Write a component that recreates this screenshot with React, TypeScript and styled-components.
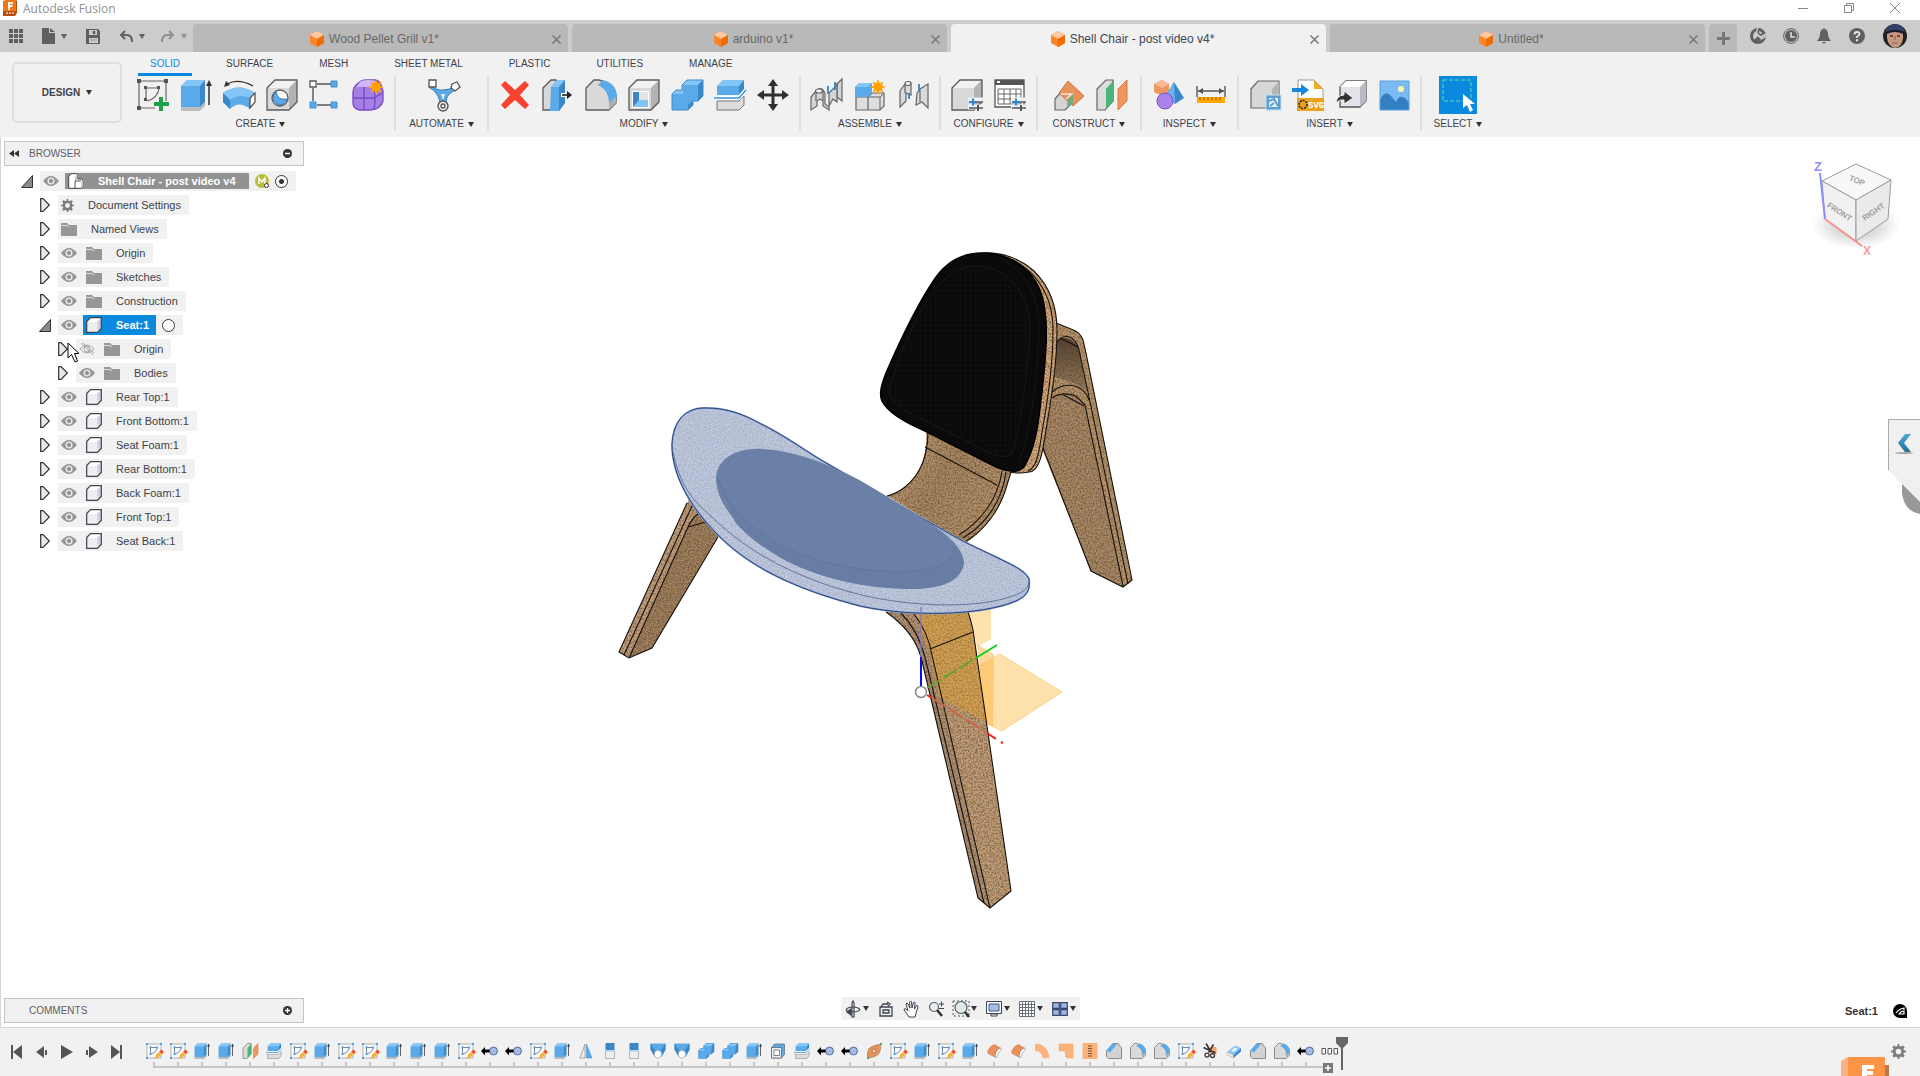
import React from "react";
import styled, { createGlobalStyle, css } from "styled-components";

const color = {
  bar: "#cccccc",
  tab: "#b9b9b9",
  panel: "#f1f1f1",
  line: "#c4c4c4",
  ink: "#3d424a",
  glyph: "#606060",
  accent: "#0a8ade",
};

const GlobalStyle = createGlobalStyle`
  * { box-sizing: border-box; }
  body {
    margin: 0;
    background: #ffffff;
    color: ${color.ink};
    font-family: "Liberation Sans", Arial, sans-serif;
    font-size: 11px;
    line-height: 14px;
  }
  button {
    margin: 0;
    padding: 0;
    border: 0;
    background: none;
    color: inherit;
    font: inherit;
  }
  svg { display: block; flex: none; overflow: visible; }
  ul, ol { margin: 0; padding: 0; list-style: none; }
  h1, h2 { margin: 0; font: inherit; }
`;

/* ------------------------------------------------------------------ */
/* Feature icons, all drawn in a 32 x 32 box                           */
/* ------------------------------------------------------------------ */

const SKY = "#5aa9e8";
const SKY_L = "#84c5f7";
const SKY_D = "#3b87c8";
const EDGE = "#5b5b5b";

const GreyBox = () => (
  <>
    <path d="M1 9 9 1H31V23L23 31H1Z" fill="#d9d9d9" />
    <path d="M1 9 9 1H31L23 9Z" fill="#f2f2f2" />
    <path d="M23 9 31 1V23L23 31Z" fill="#b3b3b3" />
    <path d="M1 9 9 1H31V23L23 31H1Z" fill="none" stroke={EDGE} strokeWidth="1.3" />
  </>
);

const Star = ({ x, y }: { x: number; y: number }) => (
  <path
    transform={`translate(${x} ${y})`}
    d="M0-8 1.6-3.8 5.6-5.6 3.8-1.6 8 0 3.8 1.6 5.6 5.6 1.6 3.8 0 8-1.6 3.8-5.6 5.6-3.8 1.6-8 0-3.8-1.6-5.6-5.6-1.6-3.8Z"
    fill="#ffa200"
  />
);

const Sliders = () => (
  <g>
    <path d="M17 21h15M17 28h15" stroke="#f1f1f1" strokeWidth="5" />
    <path d="M18 23h14M18 29h14" stroke="#555" strokeWidth="1.6" />
    <path d="M22 19.500v7M18.500 23h7" stroke="#2a86d6" strokeWidth="2" />
    <path d="M27 26v6" stroke="#555" strokeWidth="2" />
  </g>
);

const shapes: Record<string, React.ReactNode> = {
  sketch: (
    <>
      <path d="M3 2H29V22M2 3V29H18" fill="none" stroke="#666" strokeWidth="1.2" />
      <path d="M9 9H20M9 9V21M22 9Q21 19 10 22" fill="none" stroke="#666" strokeWidth="1.2" />
      <path d="M0 0h4v4H0zM27 0h4v4h-4zM0 27h4v4H0zM7 7h3v3H7zM20 7h3v3h-3zM7 19h3v3H7z" fill="#555" />
      <path d="M22 18h4v5h6v4h-6v5h-4v-5h-5v-4h5z" fill="#21a04c" />
    </>
  ),
  sketchMini: (
    <>
      <path d="M2 2H30V30H2Z" fill="#f7f9fb" stroke="#a2a2a2" strokeWidth="1.600" />
      <path d="M9 9H22M9 9V23M22 9Q21 19 10 22" fill="none" stroke="#6b7b90" strokeWidth="1.800" />
      <path d="M0 0h4v4H0zM28 0h4v4h-4zM0 28h4v4H0zM7 7h4v4H7zM20 7h4v4h-4zM7 20h4v4H7z" fill="#5b9ee0" />
      <path d="M17 32 20 24 29 15 34 20 25 29Z" fill="#f4b13d" />
      <path d="M27 17 31 13 36 18 32 22Z" fill="#e2523c" />
    </>
  ),
  extrude: (
    <>
      <path d="M1 28H20L25 23V27L20 32H1Z" fill="#bdbdbd" />
      <path d="M1 7 7 1H25L20 7V28H1Z" fill={SKY} />
      <path d="M1 7 7 1H25L20 7Z" fill={SKY_L} />
      <path d="M20 7 25 1V23L20 28Z" fill={SKY_D} />
      <path d="M29 26V5" stroke="#333" strokeWidth="1.500" />
      <path d="M26 7 29 1 32 7Z" fill="#333" />
    </>
  ),
  revolve: (
    <>
      <path d="M0 14Q16 3 32 14L27 19V30Q16 21 7 30L0 23Z" fill={SKY} />
      <path d="M0 14Q16 3 32 14L27 19Q16 14 7 21Z" fill={SKY_L} />
      <path d="M7 21V30L0 23V14Z" fill={SKY_D} />
      <path d="M27 19 32 14V23L27 29Z" fill="#fff" stroke="#555" strokeWidth="1.300" />
      <path d="M4 5Q15-1 30 7" fill="none" stroke="#333" strokeWidth="1.300" />
      <path d="M1 8 3 2 7 6Z" fill="#333" />
    </>
  ),
  hole: (
    <>
      <GreyBox />
      <circle cx="14" cy="19" r="8" fill="#fff" stroke={EDGE} strokeWidth="1.300" />
      <path d="M10 13A7 7 0 1 0 21 20Q12 22 10 13Z" fill={SKY} stroke="#2f74b3" />
    </>
  ),
  pattern: (
    <>
      <path d="M8 5H22M4 9V22M8 26H22" stroke="#555" strokeWidth="1.400" />
      <path d="M1 2h6v6H1z" fill="#fff" stroke="#555" strokeWidth="1.300" />
      <path d="M22 2h6v6h-6zM1 23h6v6H1zM22 23h6v6h-6z" fill={SKY} stroke="#3f8fd4" />
    </>
  ),
  form: (
    <>
      <path d="M1 13Q1 9 4 6L9 2Q11 1 16 1H23Q28 2 29 6L31 12V22Q30 26 26 29Q23 31 18 31H8Q2 30 1 25Z" fill="#a67fe6" stroke="#7747c4" strokeWidth="1.300" />
      <path d="M4 8 9 2Q16 0 24 2L22 9Q13 7 4 8Z" fill="#d0b5fa" />
      <path d="M12 8V30M1 19H22L30 14M22 9Q24 20 22 30" fill="none" stroke="#7747c4" strokeWidth="1.300" />
      <Star x={24} y={8} />
    </>
  ),
  automate: (
    <>
      <path d="M4 6Q11 12 17 11Q23 11 27 8L29 11Q22 15 21 18Q20 22 20 27H14Q14 21 12 17Q9 11 4 9Z" fill={SKY} stroke="#387fb8" />
      <path d="M15 15 19 15 17 21Z" fill="#f1f1f1" />
      <path d="M3 1h7v7H3zM26 5 31 3 34 8 29 12 25 9Z" fill="#fff" stroke="#555" strokeWidth="1.300" />
      <circle cx="17" cy="27" r="5" fill="#eee" stroke="#555" strokeWidth="1.400" />
      <circle cx="17" cy="27" r="2" fill="none" stroke="#555" strokeWidth="1.300" />
    </>
  ),
  remove: <path d="M2 6 6 2 16 11 26 2 30 6 21 16 30 26 26 30 16 21 6 30 2 26 11 16Z" fill="#f8432f" />,
  pressPull: (
    <>
      <path d="M1 9 9 1H14V31H1Z" fill="#d8d8d8" stroke={EDGE} strokeWidth="1.300" />
      <path d="M9 8 15 1H23V24L17 32H8Z" fill={SKY} />
      <path d="M9 8 15 1H23L17 8Z" fill={SKY_L} />
      <path d="M17 8 23 1V24L17 32Z" fill={SKY_D} />
      <path d="M19 16H27" stroke="#fff" strokeWidth="4" />
      <path d="M20 16H27" stroke="#222" strokeWidth="1.600" />
      <path d="M25 12 30 16 25 20Z" fill="#222" />
    </>
  ),
  fillet: (
    <>
      <path d="M1 9 9 1H14Q29 5 31 17V24L24 31H1Z" fill="#dadada" stroke={EDGE} strokeWidth="1.300" />
      <path d="M24 24 31 18V24L24 31Z" fill="#b0b0b0" />
      <path d="M13 6 18 1Q31 4 32 17L24 24Q24 11 13 6Z" fill={SKY} />
    </>
  ),
  chamfer: (
    <>
      <path d="M1 16 14 1H24L31 10V31H5L1 27Z" fill="#d2d2d2" stroke={EDGE} strokeWidth="1.300" />
      <path d="M1 15 13 1 21 3 8 19Z" fill={SKY} />
    </>
  ),
  shell: (
    <>
      <GreyBox />
      <path d="M4 12H21V29H4Z" fill="#fff" />
      <path d="M5 13 11 19H20V28H5Z" fill={SKY_L} />
      <path d="M5 13H11V21L5 28Z" fill={SKY_D} />
      <path d="M11 13H20V21H11Z" fill="#e4e4e4" />
    </>
  ),
  combine: (
    <>
      <path d="M1 15 5 11H11V6L16 1H32V17L27 22H22V26L17 31H1Z" fill={SKY} />
      <path d="M1 15 5 11H11V6L16 1H32L27 6H12V15Z" fill={SKY_L} />
      <path d="M27 6 32 1V17L27 22ZM17 26 22 22V26L17 31Z" fill={SKY_D} />
      <path d="M1 15 5 11H11V6L16 1H32V17L27 22H22V26L17 31H1Z" fill="none" stroke="#3b8bd0" />
    </>
  ),
  split: (
    <>
      <path d="M3 22H25L30 17V26L25 31H3Z" fill="#dcdcdc" stroke="#777" />
      <path d="M3 7 9 1H30L25 7V16H3Z" fill={SKY} />
      <path d="M3 7 9 1H30L25 7Z" fill={SKY_L} />
      <path d="M25 7 30 1V10L25 16Z" fill={SKY_D} />
      <path d="M0 19H25L32 11" fill="none" stroke="#fff" strokeWidth="4" />
      <path d="M0 19H25L32 11" fill="none" stroke="#3794dc" strokeWidth="1.500" />
    </>
  ),
  move: (
    <path d="M16 0 21 7H17.500V14.500H25V11L32 16 25 21V17.500H17.500V25H21L16 32 11 25H14.500V17.500H7V21L0 16 7 11V14.500H14.500V7H11Z" fill="#303030" />
  ),
  joint: (
    <g fill="#d5d5d5" stroke="#666" strokeWidth="1.200">
      <path d="M26 5 31 0V22L26 18Z" />
      <path d="M18 14 24 8 26 5V23L22 20 18 27Z" />
      <path d="M0 31V18L5 12Q9 8 12 11L14 14V25L18 28V31L12 27V22L9 20 6 22V27Z" />
      <path d="M5 13V22M12 12V22" fill="none" />
      <ellipse cx="8" cy="12" rx="3.500" ry="2" fill="#f4f4f4" />
      <path d="M17 7V15M24 3V11" stroke="#2b86d1" strokeWidth="1.800" />
    </g>
  ),
  newComponent: (
    <>
      <path d="M2 18H14V31H2ZM14 18 18 14H30V27L26 31H14Z" fill="#dedede" stroke="#666" strokeWidth="1.200" />
      <path d="M14 18H26L30 14M26 18V31" fill="none" stroke="#666" />
      <path d="M1 8 5 4H18V14L14 18H1Z" fill={SKY} />
      <path d="M1 8 5 4H18L14 8Z" fill={SKY_L} />
      <Star x={24} y={8} />
    </>
  ),
  asBuilt: (
    <g fill="#dadada" stroke="#666" strokeWidth="1.200">
      <path d="M3 28V12L8 5Q11 1 14 4V16L9 14V22Z" />
      <path d="M20 14 23 10 31 5V29L25 23 19 26Z" />
      <path d="M8 6V14M23 11V23" fill="none" />
      <ellipse cx="11" cy="4.500" rx="3" ry="2" fill="#f4f4f4" />
      <path d="M12 14V20M22 5V13" stroke="#2b86d1" strokeWidth="1.800" />
    </g>
  ),
  configure: (
    <>
      <GreyBox />
      <Sliders />
    </>
  ),
  configTable: (
    <>
      <path d="M1 1H30V28H1Z" fill="#fff" stroke="#555" strokeWidth="1.300" />
      <path d="M1 1H30V6H1Z" fill="#555" />
      <path d="M3 2h3v2H3z" fill="#fff" />
      <path d="M4 10H27V25H4ZM4 15H27M4 20H27M10 10V25M16 10V25M22 10V25" fill="none" stroke="#666" />
      <Sliders />
    </>
  ),
  construct: (
    <>
      <path d="M3 20 9 13H18V26L13 31H3Z" fill="#d5d5d5" stroke="#666" strokeWidth="1.200" />
      <path d="M16 2 32 17 21 27 7 14Z" fill="#e9935c" stroke="#cf7138" />
      <path d="M9 15H20L14 20" fill="none" stroke="#f7e6d8" strokeWidth="1.500" />
      <path d="M15 21 21 15V24L15 30Z" fill="#56b37c" opacity=".75" />
    </>
  ),
  planes: (
    <>
      <path d="M2 10 11 1H18V22L10 31H2Z" fill="#dcdcdc" stroke="#666" strokeWidth="1.200" />
      <path d="M11 10 19 1V22L11 30Z" fill="#4bb47a" />
      <path d="M23 10 32 1V22L23 31Z" fill="#ee965b" stroke="#d97b3f" />
    </>
  ),
  solids: (
    <>
      <path d="M2 5 10 1 17 5V13L10 17 2 13Z" fill="#ee9660" />
      <path d="M2 5 10 1 17 5 10 9Z" fill="#f8b994" />
      <path d="M22 3 32 19 23 25 13 18Z" fill="#3a86cc" />
      <path d="M22 3 23 25 13 18Z" fill="#69b2ee" />
      <circle cx="13" cy="22" r="8" fill="#a982ea" stroke="#7b52c7" />
    </>
  ),
  measure: (
    <>
      <path d="M2 7V18M30 7V18M3 12H29" stroke="#555" strokeWidth="1.400" />
      <path d="M3 12 8 9V15ZM29 12 24 9V15Z" fill="#555" />
      <path d="M2 18H30V24H2Z" fill="#ffa500" />
      <path d="M5 18v3M9 18v3M13 18v3M17 18v3M21 18v3M25 18v3" stroke="#8c5a00" />
    </>
  ),
  derive: (
    <>
      <path d="M2 10 9 2H30V21L23 29H2Z" fill="#d8d8d8" stroke="#666" strokeWidth="1.200" />
      <path d="M23 10 30 2V21L23 29Z" fill="#b6b6b6" />
      <path d="M17 16H32V31H17Z" fill="#5e9fce" stroke="#c6e0f2" />
      <path d="M20 19H29V28H20Z" fill="#e4f1fa" />
      <path d="M20 22 25 20 29 27M21 27 25 24" fill="none" stroke="#5e9fce" strokeWidth="2" />
    </>
  ),
  insertSvg: (
    <>
      <path d="M6 1H22L31 10V31H6Z" fill="#fff" stroke="#999" />
      <path d="M22 1V10H31Z" fill="#f4ac24" />
      <path d="M5 19H32V32H5Z" fill="#eba31c" />
      <circle cx="11" cy="25.500" r="4" fill="none" stroke="#222" strokeWidth="1.500" strokeDasharray="2 1" />
      <text x="16" y="29" fontFamily="Liberation Mono, monospace" fontWeight="700" fontSize="9" fill="#fff">SVG</text>
      <path d="M0 9H9V5L17 11 9 17V13H0Z" fill="#1787e0" />
    </>
  ),
  insertMesh: (
    <>
      <path d="M5 8 11 2H31V22L25 28H5Z" fill="#e2e3ea" stroke="#555" strokeWidth="1.300" />
      <path d="M5 8 11 2H31L25 8Z" fill="#fff" />
      <path d="M25 8 31 2V22L25 28Z" fill="#b8bac6" />
      <path d="M1 24Q2 16 9 16V12L18 19 9 25V21Q5 20 1 24Z" fill="#333" stroke="#f1f1f1" />
    </>
  ),
  canvas: (
    <>
      <path d="M2 2H31V31H2Z" fill="#7bbaf2" />
      <circle cx="23" cy="10" r="3" fill="#fff3b6" />
      <path d="M2 21Q7 10 13 17L18 23Q23 12 31 24V31H2Z" fill="#327fc3" />
      <path d="M2 2H31V31H2Z" fill="none" stroke="#5b9fd9" />
    </>
  ),
  select: (
    <>
      <path d="M1 1H29V22H1Z" fill="none" stroke="#63dcb4" strokeDasharray="4 2" />
      <path d="M21 15V29L25 26 28 33 31 31 28 25 33 25Z" fill="#fff" />
    </>
  ),
  jointMini: (
    <>
      <circle cx="23" cy="16" r="8" fill="#a3bce4" stroke="#3d5684" strokeWidth="1.600" />
      <path d="M-2 16 6 8V13H15V19H6V25Z" fill="#000" />
    </>
  ),
  mirror: (
    <>
      <path d="M14 2V30H4Z" fill="#eee" stroke="#888" strokeWidth="1.400" />
      <path d="M17 2V30H28Z" fill={SKY} stroke={SKY_D} />
    </>
  ),
  halfBox: (
    <>
      <path d="M7 16H25V31H7Z" fill="#eee" stroke="#999" strokeWidth="1.400" />
      <path d="M7 0H25V14H7Z" fill={SKY_D} />
      <path d="M7 14H25V17H7Z" fill="#b8dbf6" />
    </>
  ),
  loft: (
    <>
      <path d="M1 1H31V13L24 27H9L1 13Z" fill={SKY} />
      <path d="M1 1 11 16 7 24 1 13ZM31 1 21 16 26 22 31 13Z" fill={SKY_D} />
      <path d="M16 14 23 18V26L16 31 9 26V18Z" fill="#fff" stroke="#999" strokeWidth="1.400" />
    </>
  ),
  shellMini: (
    <>
      <path d="M3 9 9 2H29V23L23 30H3Z" fill={SKY} stroke="#6a7887" strokeWidth="1.600" />
      <path d="M3 9H23V30H3Z" fill="#eee" stroke="#667" strokeWidth="1.600" />
      <path d="M8 14H19V25H8Z" fill="#fff" stroke="#667" strokeWidth="1.600" />
    </>
  ),
  patch: (
    <>
      <path d="M3 30Q1 17 7 10Q12 5 29 2Q31 16 24 23Q18 29 3 30Z" fill="#e99058" stroke="#8f6f52" />
      <circle cx="16" cy="16" r="3" fill="#fff" stroke="#555" />
      <path d="M2 28h4v4H2zM28 0h4v4h-4z" fill="#3fae66" />
    </>
  ),
  thicken: (
    <>
      <path d="M3 17Q8 5 17 3L29 10Q19 14 18 28L4 21Z" fill="#e99058" stroke="#c97740" />
      <path d="M18 28Q19 14 29 10L31 14Q24 17 22 29Z" fill="#fff" stroke="#777" />
    </>
  ),
  arcBand: <path d="M3 2Q26 2 30 29L18 30Q15 15 3 15Z" fill="#fdb27b" stroke="#f39a58" />,
  corner: <path d="M2 2H30V30H18L15 27V16H2Z" fill="#fdb27b" stroke="#f39a58" />,
  stitch: (
    <>
      <path d="M1 0H31V32H1Z" fill="#fdb27b" />
      <path d="M12 6h8M12 11h8M12 16h8M12 21h8M12 26h8" stroke="#7c5331" strokeWidth="2" />
    </>
  ),
  trim: (
    <>
      <path d="M17 8H29V23H17Z" fill="#f0a26c" />
      <path d="M8 1 18 18M23 3 13 19M3 9 27 20" stroke="#333" strokeWidth="3" />
      <circle cx="10" cy="24" r="4" fill="none" stroke="#333" strokeWidth="2.500" />
      <circle cx="21" cy="25" r="4" fill="none" stroke="#333" strokeWidth="2.500" />
    </>
  ),
  erase: (
    <>
      <path d="M2 18 18 5 30 10 15 24Z" fill={SKY_L} />
      <path d="M2 18 15 24V30L2 23Z" fill="#f2f2f2" stroke="#999" />
      <path d="M15 24 30 10V17L15 30Z" fill={SKY_D} />
      <path d="M10 16 18 9 23 12 15 18Z" fill="#eef6fd" />
    </>
  ),
  group: <path d="M0 11h7v11H0zM12 11h7v11h-7zM24 11h7v11h-7z" fill="#fff" stroke="#555" strokeWidth="2" />,
};

const Feature = ({ name, size = 32 }: { name: string; size?: number }) => (
  <svg width={size} height={size} viewBox="0 0 32 32" aria-hidden="true">
    {shapes[name]}
  </svg>
);

const Caret = ({ fill = "#333" }: { fill?: string }) => (
  <svg width="6" height="5" viewBox="0 0 6 5" aria-hidden="true">
    <path d="M0 0H6L3 5Z" fill={fill} />
  </svg>
);

const GEAR =
  "M7 0h2v2l2 .8L12.500 1.300 14.700 3.500 13.200 5 14 7h2v2h-2l-.8 2 1.500 1.500-2.200 2.200L11 13.200 9 14v2H7v-2l-2-.8-1.500 1.500-2.200-2.200L2.800 11 2 9H0V7h2l.8-2L1.300 3.500 3.500 1.300 5 2.800 7 2ZM8 5a3 3 0 1 0 0 6 3 3 0 0 0 0-6Z";

const Gear = ({ size }: { size: number }) => (
  <svg width={size} height={size} viewBox="0 0 16 16" aria-hidden="true">
    <path d={GEAR} fill="#7d7d7d" fillRule="evenodd" />
  </svg>
);

/* ------------------------------------------------------------------ */
/* Title bar                                                           */
/* ------------------------------------------------------------------ */

const Shell = styled.div`
  position: relative;
  display: flex;
  flex-direction: column;
  min-height: 100vh;
  overflow: hidden;
`;

const TitleBar = styled.header`
  display: flex;
  align-items: flex-start;
  gap: 6px;
  height: 20px;
  padding-left: 3px;
  color: #909090;
  h1 {
    flex: 1;
    font-family: "Open Sans", "Noto Sans", sans-serif;
    font-size: 12px;
    line-height: 17px;
  }
`;

const WindowButton = styled.button`
  display: grid;
  place-items: center;
  width: 46px;
  height: 15px;
`;

const WindowButtons = styled.div`
  display: flex;
  padding-right: 2px;
`;

const Title = () => (
  <TitleBar>
    <svg width="14" height="16" viewBox="0 0 14 16" aria-hidden="true">
      <path d="M0 2 3 0H13L14 1V13L12 16H0Z" fill="#b3500f" />
      <path d="M0 1 3 0H13V11H0Z" fill="#f37515" />
      <path d="M5 2H10V4H7V5H9.500V7H7V10H5Z" fill="#fff" />
      <path d="M3 13h8" stroke="#f7c7a0" strokeWidth="1.500" strokeDasharray="2 1" />
    </svg>
    <h1>Autodesk Fusion</h1>
    <WindowButtons>
      <WindowButton aria-label="Minimize">
        <svg width="10" height="10"><path d="M0 5.500H10" stroke="#888" /></svg>
      </WindowButton>
      <WindowButton aria-label="Restore">
        <svg width="10" height="10"><path d="M.5 2.500H7.500V9.500H.5ZM2.500 2.500V.5H9.500V7.500H7.500" fill="none" stroke="#888" /></svg>
      </WindowButton>
      <WindowButton aria-label="Close">
        <svg width="10" height="10"><path d="M0 0 10 10M10 0 0 10" stroke="#888" /></svg>
      </WindowButton>
    </WindowButtons>
  </TitleBar>
);

/* ------------------------------------------------------------------ */
/* Document tabs                                                       */
/* ------------------------------------------------------------------ */

const TabBar = styled.div`
  display: flex;
  align-items: flex-end;
  gap: 4px;
  height: 32px;
  background: ${color.bar};
`;

const QuickAccess = styled.div`
  display: flex;
  align-items: center;
  align-self: stretch;
  gap: 18px;
  width: 189px;
  padding-left: 9px;
`;

const QuickButton = styled.button<{ $faded?: boolean }>`
  display: flex;
  align-items: center;
  gap: 6px;
  opacity: ${(p) => (p.$faded ? 0.55 : 1)};
`;

const DocTab = styled.div<{ $active?: boolean }>`
  display: flex;
  align-items: center;
  flex: 1;
  height: 28px;
  padding: 2px 7px 0 4px;
  border-radius: 4px 4px 0 0;
  background: ${(p) => (p.$active ? color.panel : color.tab)};
  color: ${(p) => (p.$active ? "#404652" : "#686868")};
`;

const DocName = styled.button`
  display: flex;
  flex: 1;
  align-items: center;
  justify-content: center;
  gap: 5px;
  font-size: 12px;
`;

const AddTab = styled.button`
  display: grid;
  place-items: center;
  width: 28px;
  height: 28px;
  border-radius: 4px 4px 0 0;
  background: ${color.tab};
`;

const Account = styled.div`
  display: flex;
  align-items: center;
  align-self: stretch;
  padding-right: 3px;
`;

const AccountButton = styled.button`
  display: grid;
  place-items: center;
  width: 33px;
  height: 32px;
`;

const Avatar = styled(AccountButton)`
  width: 44px;
`;

const OrangeCube = () => (
  <svg width="14" height="16" viewBox="0 0 14 16" aria-hidden="true">
    <path d="M0 4 7 0 14 4V12L7 16 0 12Z" fill="#ff8426" />
    <path d="M0 4 7 0 14 4 7 8Z" fill="#ffc9a1" />
    <path d="M7 8 14 4V12L7 16Z" fill="#ee6c05" />
  </svg>
);

const Cross = () => (
  <svg width="9" height="9" viewBox="0 0 9 9" aria-hidden="true">
    <path d="M.5.5 8.500 8.500M8.500.5.5 8.500" stroke="#777" strokeWidth="1.500" />
  </svg>
);

const documents = [
  { name: "Wood Pellet Grill v1*" },
  { name: "arduino v1*" },
  { name: "Shell Chair - post video v4*", active: true },
  { name: "Untitled*" },
];

const Tabs = () => (
  <TabBar>
    <QuickAccess>
      <QuickButton aria-label="Data panel">
        <svg width="14" height="14" viewBox="0 0 14 14">
          <path d="M0 0h4v4H0zM5 0h4v4H5zM10 0h4v4h-4zM0 5h4v4H0zM5 5h4v4H5zM10 5h4v4h-4zM0 10h4v4H0zM5 10h4v4H5zM10 10h4v4h-4z" fill={color.glyph} />
        </svg>
      </QuickButton>
      <QuickButton aria-label="File">
        <svg width="14" height="16" viewBox="0 0 14 16">
          <path d="M1 0H8V5H14V16H1ZM9 0 14 4H9Z" fill={color.glyph} />
        </svg>
        <Caret fill={color.glyph} />
      </QuickButton>
      <QuickButton aria-label="Save">
        <svg width="16" height="15" viewBox="0 0 16 15">
          <path d="M1 0H13L15 2V15H1ZM4 1V6H12V1ZM4 9V14H13V9Z" fill={color.glyph} fillRule="evenodd" />
          <path d="M8 2H10V5H8ZM5 11H12" fill={color.glyph} stroke={color.glyph} strokeWidth=".5" />
        </svg>
      </QuickButton>
      <QuickButton aria-label="Undo">
        <svg width="14" height="13" viewBox="0 0 14 13">
          <path d="M6 1 2 5 6 9M2 5H8Q13 5 13 12" fill="none" stroke={color.glyph} strokeWidth="2" />
        </svg>
        <Caret fill={color.glyph} />
      </QuickButton>
      <QuickButton aria-label="Redo" $faded>
        <svg width="12" height="13" viewBox="0 0 12 13">
          <path d="M6 1 10 5 6 9M10 5H4Q-1 5-1 12" fill="none" stroke={color.glyph} strokeWidth="2" />
        </svg>
        <Caret fill={color.glyph} />
      </QuickButton>
    </QuickAccess>
    {documents.map((d) => (
      <DocTab key={d.name} $active={d.active}>
        <DocName>
          <OrangeCube />
          {d.name}
        </DocName>
        <button aria-label={`Close ${d.name}`}>
          <Cross />
        </button>
      </DocTab>
    ))}
    <AddTab aria-label="New design">
      <svg width="13" height="13"><path d="M6.500 0V13M0 6.500H13" stroke="#777" strokeWidth="3" /></svg>
    </AddTab>
    <Account>
      <AccountButton aria-label="Extensions">
        <svg width="16" height="16" viewBox="0 0 16 16">
          <circle cx="8" cy="8" r="6.500" fill="none" stroke={color.glyph} strokeWidth="3" />
          <path d="M3 13 8 8 11 11 8 15Z" fill={color.glyph} />
          <path d="M8 0 6 6 10 9 16 6M11 11 16 8" fill="none" stroke={color.bar} strokeWidth="1.500" />
          <path d="M10 0 8 4 9 6 11 7 14 5" fill="none" stroke={color.glyph} strokeWidth="1.600" />
        </svg>
      </AccountButton>
      <AccountButton aria-label="Job status">
        <svg width="16" height="16" viewBox="0 0 16 16">
          <circle cx="8" cy="8" r="7.400" fill="none" stroke={color.glyph} />
          <circle cx="8" cy="8" r="6" fill={color.glyph} />
          <path d="M8 4V9H12" fill="none" stroke="#ddd" strokeWidth="1.600" />
        </svg>
      </AccountButton>
      <AccountButton aria-label="Notifications">
        <svg width="14" height="16" viewBox="0 0 14 16">
          <path d="M6 1Q7-1 8 1Q11 2 11 6Q11 10 14 13H0Q3 10 3 6Q3 2 6 1ZM5 14H9Q7 17 5 14Z" fill={color.glyph} />
        </svg>
      </AccountButton>
      <AccountButton aria-label="Help">
        <svg width="16" height="16" viewBox="0 0 16 16">
          <circle cx="8" cy="8" r="8" fill={color.glyph} />
          <path d="M5.500 6.500Q5.500 4 8 4T10.500 6.300Q10.500 7.500 8 8.500V10" fill="none" stroke="#e4e4e4" strokeWidth="1.800" />
          <path d="M7 11.300h2v2H7z" fill="#e4e4e4" />
        </svg>
      </AccountButton>
      <Avatar aria-label="Account">
        <svg width="24" height="24" viewBox="0 0 24 24">
          <defs>
            <clipPath id="avatar"><circle cx="12" cy="12" r="12" /></clipPath>
          </defs>
          <g clipPath="url(#avatar)">
            <path d="M0 0H24V24H0Z" fill="#20251c" />
            <path d="M4 8H20V14Q19 23 12 24Q5 22 4 14Z" fill="#c79880" />
            <path d="M2 8Q4 0 12 0T22 8Q12 4 2 8Z" fill="#33416b" />
            <path d="M3 8Q12 4 21 8L20 10Q12 6 4 10Z" fill="#171d33" />
            <path d="M7 12h3M14 12h3" stroke="#4b2f28" strokeWidth="1.500" />
            <path d="M12 12v4M9 19h6" stroke="#8d5c49" />
          </g>
        </svg>
      </Avatar>
    </Account>
  </TabBar>
);

/* ------------------------------------------------------------------ */
/* Ribbon                                                              */
/* ------------------------------------------------------------------ */

const Ribbon = styled.div`
  display: flex;
  height: 85px;
  background: ${color.panel};
`;

const Workspace = styled.button`
  display: flex;
  align-items: center;
  justify-content: center;
  gap: 6px;
  width: 110px;
  height: 61px;
  margin: 10px 5px 0 12px;
  border: 2px solid #dfdfdf;
  border-radius: 5px;
  font-size: 10px;
  font-weight: 700;
`;

const RibbonTabs = styled.nav`
  display: flex;
  gap: 22px;
  padding-left: 11px;
`;

const RibbonTab = styled.button<{ $active?: boolean }>`
  height: 24px;
  padding: 2px 12px 0;
  border-bottom: 3px solid transparent;
  font-size: 10px;
  ${(p) =>
    p.$active &&
    css`
      border-color: ${color.accent};
      color: ${color.accent};
    `}
`;

const Groups = styled.div`
  display: flex;
`;

const Group = styled.section<{ $min?: number }>`
  display: flex;
  flex-direction: column;
  align-items: center;
  min-width: ${(p) => p.$min ?? 0}px;
  padding: 0 5px;
  border-right: 2px solid #dedede;
  height: 54px;
  &:last-child {
    border-right-color: transparent;
  }
`;

const Tools = styled.div`
  display: flex;
  gap: 5px;
  padding: 0 2px;
`;

const Tool = styled.button<{ $on?: boolean }>`
  display: grid;
  place-items: center;
  width: 38px;
  height: 38px;
  flex: none;
  background: ${(p) => (p.$on ? color.accent : "none")};
`;

const GroupLabel = styled.button`
  display: flex;
  align-items: center;
  gap: 4px;
  margin-top: 3px;
  font-size: 10px;
`;

const ribbonTabs = ["SOLID", "SURFACE", "MESH", "SHEET METAL", "PLASTIC", "UTILITIES", "MANAGE"];

const groups: { label: string; tools: string[]; min?: number; on?: boolean }[] = [
  { label: "CREATE", tools: ["sketch", "extrude", "revolve", "hole", "pattern", "form"] },
  { label: "AUTOMATE", tools: ["automate"], min: 93 },
  { label: "MODIFY", tools: ["remove", "pressPull", "fillet", "shell", "combine", "split", "move"] },
  { label: "ASSEMBLE", tools: ["joint", "newComponent", "asBuilt"] },
  { label: "CONFIGURE", tools: ["configure", "configTable"] },
  { label: "CONSTRUCT", tools: ["construct", "planes"], min: 104 },
  { label: "INSPECT", tools: ["solids", "measure"] },
  { label: "INSERT", tools: ["derive", "insertSvg", "insertMesh", "canvas"] },
  { label: "SELECT", tools: ["select"], min: 74, on: true },
];

const RibbonBar = () => (
  <Ribbon>
    <Workspace>
      DESIGN <Caret />
    </Workspace>
    <div>
      <RibbonTabs>
        {ribbonTabs.map((t, i) => (
          <RibbonTab key={t} $active={i === 0}>
            {t}
          </RibbonTab>
        ))}
      </RibbonTabs>
      <Groups>
        {groups.map((g) => (
          <Group key={g.label} $min={g.min}>
            <Tools>
              {g.tools.map((t) => (
                <Tool key={t} aria-label={t} $on={g.on}>
                  <Feature name={t} />
                </Tool>
              ))}
            </Tools>
            <GroupLabel>
              {g.label} <Caret />
            </GroupLabel>
          </Group>
        ))}
      </Groups>
    </div>
  </Ribbon>
);

/* ------------------------------------------------------------------ */
/* Chair model                                                         */
/* ------------------------------------------------------------------ */

const Stage = styled.main`
  position: relative;
  display: grid;
  grid-template-columns: 304px 1fr 304px;
  flex: 1;
`;

const ModelSvg = styled.svg`
  position: absolute;
  inset: 0;
  width: 100%;
  height: 100%;
`;

const SEAT =
  "M707 408C685 407 673 421 672 445C672 475 690 507 718 535C755 573 810 593 860 606C910 617 980 616 1016 601C1029 595 1030 588 1029 579C1025 570 1010 564 996 557C975 547 962 541 950 534L821 460C800 447 780 433 761 424C745 415 728 408 707 408Z";
const BACK =
  "M982 253C960 253 943 265 932 283C915 309 896 350 886 373C881 386 879 394 882 401C888 413 906 423 925 431L996 467C1005 471 1018 474 1024 467C1034 450 1038 430 1041 400C1046 360 1048 330 1045 312C1042 280 1022 254 982 253Z";
const RIM =
  "M982 253C1000 252 1018 257 1034 271C1050 287 1057 308 1057 330C1057 365 1051 400 1046 430C1043 450 1040 472 1029 472C1020 474 1010 474 1000 468L1030 400Z";

const Chair = () => (
  <ModelSvg viewBox="0 137 1920 890" role="img" aria-label="Shell chair model">
    <defs>
      <filter id="wood" x="0" y="0" width="100%" height="100%" colorInterpolationFilters="sRGB">
        <feTurbulence type="fractalNoise" baseFrequency=".6" numOctaves="2" seed="4" result="n" />
        <feColorMatrix in="n" values="0 0 0 0 .34  0 0 0 0 .25  0 0 0 0 .16  0 1.600 0 0 -.6" result="g" />
        <feComposite in="g" in2="SourceAlpha" operator="in" result="c" />
        <feMerge>
          <feMergeNode in="SourceGraphic" />
          <feMergeNode in="c" />
        </feMerge>
      </filter>
      <filter id="veneer" x="0" y="0" width="100%" height="100%" colorInterpolationFilters="sRGB">
        <feTurbulence type="fractalNoise" baseFrequency=".7" numOctaves="2" seed="9" result="n" />
        <feColorMatrix in="n" values="0 0 0 0 .6  0 0 0 0 .6  0 0 0 0 .65  0 1.400 0 0 -.5" result="g" />
        <feComposite in="g" in2="SourceAlpha" operator="in" result="c" />
        <feMerge>
          <feMergeNode in="SourceGraphic" />
          <feMergeNode in="c" />
        </feMerge>
      </filter>
      <linearGradient id="neck" x1="0" y1="0" x2="1" y2=".6">
        <stop offset="0" stopColor="#cba67b" />
        <stop offset=".5" stopColor="#a98862" />
        <stop offset="1" stopColor="#ba976f" />
      </linearGradient>
      <linearGradient id="hollow" x1="0" y1="0" x2="0" y2="1">
        <stop offset="0" stopColor="#51402f" />
        <stop offset="1" stopColor="#9a7f61" />
      </linearGradient>
      <pattern id="weave" width="5" height="5" patternUnits="userSpaceOnUse">
        <path d="M0 0H5M0 0V5" stroke="#111111" />
      </pattern>
    </defs>

    {/* origin planes */}
    <path d="M968 606H991V639L977 647Z" fill="#fee1ad" />
    <path d="M1000 654 1062 692 1002 731 986 723 978 666Z" fill="#fee0ab" stroke="#fbd391" />
    <path d="M977 644 994 654 993 727 986 723Z" fill="#ffb84a" fillOpacity=".55" />

    <g filter="url(#wood)">
      {/* rear right leg */}
      <path d="M1055 323 1071 329Q1080 332 1083 340L1086 353 1132 580 1123 587 1091 571 1040 442Z" fill="#b9986f" />
      <path d="M1056 342Q1062 336 1070 339 1077 343 1079 350L1087 391Q1075 382 1055 377Z" fill="url(#hollow)" />
      <path d="M1052 398Q1062 391 1076 396L1085 405 1123 586 1091 571 1041 446Z" fill="#aa8a67" />
      {/* neck */}
      <path d="M926 430C928 455 920 475 905 487Q898 493 887 496L966 543C985 530 1000 510 1007 485L1012 468Z" fill="url(#neck)" />
      {/* rear left leg */}
      <path d="M691 497 687 503 619 652 629 658 652 648 719 535Z" fill="#a2825f" />
      <path d="M691 497 687 503 619 652 629 658 688 527 700 510Z" fill="#c6a27e" />
      {/* front leg */}
      <path d="M886 612C905 625 916 640 921 657L932 703 978 898 990 908 1011 891 973 630 967 606H886Z" fill="#c3a079" />
      <path d="M886 612C905 625 916 640 921 657L932 703 978 898 990 908 932 655Q927 630 911 608Z" fill="#b39477" />
      <path d={RIM} fill="#d9ad7f" />
    </g>
    <path d="M914 610H967L973 630 987 723 939 697 930 655Z" fill="#f0a416" fillOpacity=".34" />

    <g fill="none" stroke="#15110d" strokeWidth="1.100">
      <path d="M1056 323 1071 329Q1080 332 1083 340L1086 353 1132 580 1123 587 1091 571 1043 448" />
      <path d="M1057 342Q1062 335 1070 337 1077 341 1079 350L1089 397 1128 584" />
      <path d="M1052 392Q1062 383 1075 386 1086 390 1089 400M1052 398Q1062 391 1076 396L1085 405 1123 586M1062 394 1084 406M1060 338 1078 347" />
      <path d="M928 431C928 455 920 475 905 487Q898 493 887 496M966 541C985 530 1000 510 1007 485L1011 472M925 447 997 485M1002 471C998 500 980 522 959 535M1006 472C1002 502 985 525 963 538" />
      <path d="M687 503 619 652 629 658 652 648 718 537M629 658 688 527Q692 518 699 513M624 655 692 506M688 527 706 522" />
      <path d="M886 612C905 625 916 640 921 657L932 703 978 898 990 908 1011 891 973 630Q971 620 968 612M914 614Q928 632 932 655L990 908M900 612Q918 630 925 657L984 903M930 649 973 632" />
      <path d="M982 253C1000 252 1018 257 1034 271C1050 287 1057 308 1057 330C1057 365 1051 400 1046 430C1043 450 1040 472 1029 472Q1018 474 1010 472" />
      <path d="M1000 256C1035 265 1053 295 1053 330C1053 370 1047 405 1042 432 1039 455 1036 468 1028 471" />
    </g>

    <path d={BACK} fill="#0a0a0a" stroke="#000" strokeWidth="1.500" />
    <path
      d="M970 266C946 270 932 293 920 312 905 340 895 370 889 388 888 400 900 409 925 421L992 454Q1010 462 1014 448C1023 410 1028 370 1030 330 1030 290 1005 264 970 266Z"
      fill="url(#weave)"
      stroke="#181818"
    />
    <path d="M1000 257Q1038 280 1039 325C1038 380 1030 430 1020 460" fill="none" stroke="#181818" />

    <g filter="url(#veneer)">
      <path d={SEAT} fill="#bfcbe2" />
    </g>
    <path d={SEAT} fill="none" stroke="#8ba5dc" strokeWidth="2" />
    <path d={SEAT} fill="none" stroke="#2a4072" strokeWidth="1" />
    <path d="M673 452C680 485 692 500 711 516 750 555 800 578 850 592 900 606 970 610 1010 597Q1027 592 1029 583" fill="none" stroke="#62759c" />
    <path
      d="M754 449C733 450 717 460 716 478C716 505 742 533 779 557C820 580 870 588 914 589C945 588 963 576 964 562C962 545 945 533 921 517L868 485C840 468 790 447 754 449Z"
      fill="#6b80a6"
    />
    <path d="M718 477C722 500 745 525 780 545 830 568 870 573 915 571 940 568 956 562 953 545L964 562Q962 588 914 589 860 589 815 573 760 552 735 522Z" fill="#677da4" />
    <path d="M718 477C722 500 745 525 780 545 830 568 870 573 915 571 940 568 956 562 953 545" fill="none" stroke="#5f769f" />

    {/* origin axes */}
    <path d="M921 607V657" stroke="#7d7dc4" strokeWidth="2" opacity=".7" />
    <path d="M921 657V687" stroke="#0a0af5" strokeWidth="2" />
    <path d="M927 688 976 658" stroke="#6aa032" strokeWidth="2" strokeDasharray="16 3" />
    <path d="M976 658 997 645" stroke="#0bd01d" strokeWidth="2" />
    <path d="M932 698 986 732" stroke="#cc6448" strokeWidth="2" strokeDasharray="16 4" />
    <path d="M927 695 932 698M987 733 996 739M1001 742 1003 743" stroke="#f51414" strokeWidth="2" />
    <circle cx="921" cy="692" r="5.500" fill="#fff" stroke="#8d8d8d" strokeWidth="1.600" />
  </ModelSvg>
);

/* ------------------------------------------------------------------ */
/* Browser tree                                                        */
/* ------------------------------------------------------------------ */

const LeftColumn = styled.div`
  position: relative;
  display: flex;
  flex-direction: column;
  justify-content: space-between;
  padding: 4px 0 4px 3px;
  border-left: 1px solid #d6d6d6;
`;

const PanelHead = styled.div`
  display: flex;
  align-items: center;
  height: 25px;
  padding: 0 11px 0 4px;
  border: 1px solid ${color.line};
  background: ${color.panel};
  color: #5c6066;
  font-size: 10px;
  h2 {
    flex: 1;
  }
`;

const HeadSlot = styled.span`
  display: block;
  width: 20px;
`;

const Tree = styled.ul`
  padding-top: 3px;
`;

const Row = styled.li<{ $level: number }>`
  display: flex;
  align-items: center;
  gap: 7px;
  height: 24px;
  padding-left: ${(p) => [16, 34, 52][p.$level]}px;
`;

const Expander = styled.button`
  display: flex;
  justify-content: center;
  width: 13px;
`;

const RowBody = styled.div`
  display: flex;
  align-items: center;
  gap: 6px;
  height: 20px;
  padding: 0 8px 0 3px;
  background: ${color.panel};
`;

const Name = styled.button<{ $mark?: "root" | "selected"; $flush?: boolean }>`
  display: flex;
  align-items: center;
  gap: 14px;
  height: ${(p) => (p.$mark === "root" ? 16 : 20)}px;
  padding: 0 ${(p) => (p.$mark === "root" ? 13 : p.$mark ? 7 : 0)}px 0 ${(p) => (p.$flush ? 0 : 3)}px;
  white-space: nowrap;
  ${(p) =>
    p.$mark &&
    css`
      background: ${p.$mark === "root" ? "#929292" : color.accent};
      color: #fff;
      font-weight: 700;
    `}
`;

const Radio = styled.input`
  appearance: none;
  width: 13px;
  height: 13px;
  margin: 0;
  border: 1px solid #333;
  border-radius: 50%;
  background: #fff;
  &:checked {
    background: radial-gradient(circle, #333 0 2px, #fff 3px);
  }
`;

const Cursor = styled.svg`
  position: absolute;
  left: 66px;
  top: 205px;
`;

const Eye = ({ hidden }: { hidden?: boolean }) => (
  <svg width="16" height="12" viewBox="0 0 16 12">
    {hidden ? (
      <g fill="none" stroke="#a8a8a8">
        <path d="M1 6Q8-2 15 6Q8 14 1 6Z" />
        <circle cx="8" cy="6" r="3" />
        <path d="M2 0 14 12M4 0 15 10" />
      </g>
    ) : (
      <>
        <path d="M0 6Q8-4 16 6Q8 16 0 6Z" fill="#969696" />
        <circle cx="8" cy="6" r="3.500" fill="#e6e6e6" />
        <circle cx="8" cy="6" r="2" fill="#8d8d8d" />
      </>
    )}
  </svg>
);

const FolderIcon = () => (
  <svg width="16" height="13" viewBox="0 0 16 13">
    <path d="M0 0H6L8 2H16V13H0Z" fill="#979797" />
    <path d="M0 2.500H6L8 4" fill="none" stroke="#e0e0e0" />
  </svg>
);

const BodyIcon = () => (
  <svg width="16" height="16" viewBox="0 0 16 16">
    <path d="M.7 4.500 4.500.7H15.300V11.500L11.500 15.300H.7Z" fill="#fff" />
    <path d="M11 5 15.300.7V11.500L11.500 15.300Z" fill="#cfd0dc" />
    <path d="M1 5H11V15H1Z" fill="#eeeef3" />
    <path d="M.7 4.500 4.500.7H15.300V11.500L11.500 15.300H.7Z" fill="none" stroke="#3f414a" strokeWidth="1.200" />
  </svg>
);

const AssemblyIcon = () => (
  <svg width="16" height="16" viewBox="0 0 16 16">
    <path d="M.7 3.500 3 .7H9.500V6H13.500L15.300 8V13L13 15.300H.7Z" fill="#fff" stroke="#444" />
    <path d="M7 4 9.500.7V6L7 8ZM13 9 15.300 7V13L13 15.300Z" fill="#c9cad4" />
    <path d="M7 8V15M7 8H13" stroke="#555" />
  </svg>
);

const OpenMark = () => (
  <svg width="12" height="13" viewBox="0 0 12 13">
    <path d="M11.500 .5V12.500H.5Z" fill="#8a8a8a" stroke="#333" />
  </svg>
);

const ClosedMark = () => (
  <svg width="10" height="14" viewBox="0 0 10 14">
    <path d="M.7.7H3L9.300 7 3 13.300H.7Z" fill="#e9e9e9" stroke="#333" strokeWidth="1.200" />
  </svg>
);

type Node = { name: string; level: number; icon: "body" | "folder" | "gear"; eye?: "on" | "off"; selected?: boolean };

const nodes: Node[] = [
  { name: "Document Settings", level: 1, icon: "gear" },
  { name: "Named Views", level: 1, icon: "folder" },
  { name: "Origin", level: 1, icon: "folder", eye: "on" },
  { name: "Sketches", level: 1, icon: "folder", eye: "on" },
  { name: "Construction", level: 1, icon: "folder", eye: "on" },
  { name: "Seat:1", level: 1, icon: "body", eye: "on", selected: true },
  { name: "Origin", level: 2, icon: "folder", eye: "off" },
  { name: "Bodies", level: 2, icon: "folder", eye: "on" },
  ...["Rear Top:1", "Front Bottom:1", "Seat Foam:1", "Rear Bottom:1", "Back Foam:1", "Front Top:1", "Seat Back:1"].map(
    (name): Node => ({ name, level: 1, icon: "body", eye: "on" })
  ),
];

const Browser = () => (
  <LeftColumn>
    <section>
      <PanelHead>
        <HeadSlot>
          <svg width="10" height="7"><path d="M5 0V7L0 3.500ZM10 0V7L5 3.500Z" fill="#333" /></svg>
        </HeadSlot>
        <h2>BROWSER</h2>
        <button aria-label="Minimize browser">
          <svg width="9" height="9"><circle cx="4.500" cy="4.500" r="4.500" fill="#333" /><path d="M2 4.500H7" stroke="#fff" strokeWidth="1.500" /></svg>
        </button>
      </PanelHead>
      <Tree>
        <Row $level={0}>
          <Expander aria-label="Collapse Shell Chair"><OpenMark /></Expander>
          <RowBody>
            <button aria-label="Toggle visibility"><Eye /></button>
            <Name $mark="root">
              <AssemblyIcon />
              Shell Chair - post video v4
            </Name>
            <svg width="14" height="14" viewBox="0 0 14 14">
              <circle cx="7" cy="7" r="7" fill="#b6bd3c" />
              <path d="M4 10V4L7 8 10 4V10" fill="none" stroke="#fff" strokeWidth="1.400" />
              <circle cx="11.500" cy="11.500" r="2" fill="#fff" stroke="#333" />
            </svg>
            <Radio type="radio" name="active" aria-label="Activate Shell Chair" defaultChecked />
          </RowBody>
        </Row>
        {nodes.map((n) => (
          <Row key={n.level + n.name} $level={n.level}>
            <Expander aria-label={`Expand ${n.name}`}>{n.selected ? <OpenMark /> : <ClosedMark />}</Expander>
            <RowBody>
              {n.eye && (
                <button aria-label="Toggle visibility">
                  <Eye hidden={n.eye === "off"} />
                </button>
              )}
              <Name $mark={n.selected ? "selected" : undefined} $flush={!n.eye}>
                {n.icon === "gear" && <Gear size={13} />}
                {n.icon === "folder" && <FolderIcon />}
                {n.icon === "body" && <BodyIcon />}
                {n.name}
              </Name>
              {n.selected && <Radio type="radio" name="active" aria-label={`Activate ${n.name}`} />}
            </RowBody>
          </Row>
        ))}
      </Tree>
    </section>
    <PanelHead>
      <HeadSlot />
      <h2>COMMENTS</h2>
      <button aria-label="Expand comments">
        <svg width="9" height="9"><circle cx="4.500" cy="4.500" r="4.500" fill="#333" /><path d="M2 4.500H7M4.500 2V7" stroke="#fff" strokeWidth="1.300" /></svg>
      </button>
    </PanelHead>
    <Cursor width="13" height="21" viewBox="0 0 13 21" aria-hidden="true">
      <path d="M1 1V16L4.500 12.500 8 20 10.500 19 7.500 11.500H12Z" fill="#fff" stroke="#000" />
    </Cursor>
  </LeftColumn>
);

/* ------------------------------------------------------------------ */
/* Navigation bar, view cube and status                                */
/* ------------------------------------------------------------------ */

const CenterColumn = styled.div`
  position: relative;
  display: flex;
  align-items: flex-end;
  justify-content: center;
  padding-bottom: 7px;
`;

const NavBar = styled.div`
  display: flex;
  align-items: center;
  gap: 9px;
  height: 23px;
  padding: 0 4px;
  background: ${color.panel};
`;

const NavButton = styled.button`
  display: flex;
  align-items: center;
  gap: 2px;
`;

const navIcons: { name: string; menu?: boolean; art: React.ReactNode }[] = [
  {
    name: "Orbit",
    menu: true,
    art: (
      <g fill="none" stroke="#3f4350" strokeWidth="1.200">
        <path d="M7 16V2L8 0 9 2V16Z" fill="#fff" />
        <path d="M4 11Q-1 9 3 7Q8 5 13 7Q17 9 12 10.500L5 11" />
        <path d="M6 8 2 11 6 14Z" fill="#3f4350" />
      </g>
    ),
  },
  {
    name: "Look at",
    art: (
      <g fill="none" stroke="#3f4350" strokeWidth="1.300">
        <path d="M2 6H14V15H2ZM5 9H11V12H5Z" />
        <path d="M3 6 5 3H10M9 1 12 3 10 5" />
      </g>
    ),
  },
  {
    name: "Pan",
    art: (
      <path
        d="M6 16Q4 13 1 9Q1 7 3 8L5 10 3 3Q4 1 5 3L7 7 6.500 1Q8-1 8.500 1L9 7 10.500 1.500Q12 .5 12 2.500L11.500 8 13.500 4.500Q15 4 15 6L13 12 12 16Z"
        fill="#fff"
        stroke="#3f4350"
      />
    ),
  },
  {
    name: "Zoom",
    art: (
      <>
        <circle cx="6" cy="6" r="4.500" fill="#e8eef2" stroke="#59606b" strokeWidth="1.200" />
        <path d="M9 9 14 15" stroke="#333" strokeWidth="2.500" />
        <path d="M11 3H16M13.500 .5V5.500M11 7.500H16" stroke="#444" />
      </>
    ),
  },
  {
    name: "Fit",
    menu: true,
    art: (
      <>
        <path d="M0 0H16V15H0Z" fill="none" stroke="#555" strokeDasharray="2 2" />
        <circle cx="8" cy="6.500" r="6" fill="#dfe9e9" stroke="#59606b" strokeWidth="1.200" />
        <path d="M12 11 16 16" stroke="#333" strokeWidth="2.500" />
      </>
    ),
  },
  {
    name: "Display settings",
    menu: true,
    art: (
      <>
        <path d="M.5.5H15.500V12.500H.5Z" fill="#fff" stroke="#3f4350" />
        <path d="M3 3H13V10H3Z" fill="#a9c0e6" stroke="#3f5788" />
        <path d="M5 13H11V15H5Z" fill="#fff" stroke="#3f4350" />
      </>
    ),
  },
  {
    name: "Grid",
    menu: true,
    art: <path d="M.5.5H15.500V15.500H.5ZM3.500 0V16M6.500 0V16M9.500 0V16M12.500 0V16M0 3.500H16M0 6.500H16M0 9.500H16M0 12.500H16" fill="#fff" stroke="#6c707a" />,
  },
  {
    name: "Viewports",
    menu: true,
    art: (
      <path d="M.7 1.700H7.300V7.300H.7ZM8.700 1.700H15.300V7.300H8.700ZM.7 8.700H7.300V14.300H.7ZM8.700 8.700H15.300V14.300H8.700Z" fill="#9db6e0" stroke="#37486e" strokeWidth="1.200" />
    ),
  },
];

const RightColumn = styled.div`
  position: relative;
  display: flex;
  flex-direction: column;
  align-items: flex-end;
`;

const CubeWrap = styled.div`
  padding: 20px 20px 0 0;
`;

const DrawerButton = styled.button`
  margin-top: 162px;
`;

const Status = styled.div`
  display: flex;
  align-items: center;
  gap: 15px;
  margin-top: auto;
  padding: 0 13px 9px 0;
  font-weight: 700;
  color: #333;
`;

const ViewCube = () => (
  <svg width="88" height="100" viewBox="1812 157 88 100" aria-label="View cube" role="img">
    <defs>
      <radialGradient id="shade">
        <stop offset="0" stopColor="#777" stopOpacity=".6" />
        <stop offset="1" stopColor="#999" stopOpacity="0" />
      </radialGradient>
    </defs>
    <ellipse cx="1856" cy="225" rx="44" ry="24" fill="url(#shade)" />
    <g stroke="#9b9b9b" strokeLinejoin="round">
      <path d="M1822 181 1856 164 1891 180 1856 200Z" fill="#f8f8f8" />
      <path d="M1822 181 1856 200V241L1825 219Z" fill="#f1f1f1" />
      <path d="M1856 200 1891 180 1888 219 1856 241Z" fill="#eaeaea" />
    </g>
    <path d="M1820 173 1825 219" stroke="#8d8dfa" strokeWidth="2" />
    <path d="M1825 219 1862 246" stroke="#f59292" strokeWidth="2" />
    <g fontFamily="Liberation Sans, Arial, sans-serif" textAnchor="middle" fontWeight="700" fill="#a0a0a0">
      <text fontSize="8" transform="translate(1856 183) rotate(22)">TOP</text>
      <text fontSize="8" transform="translate(1838 214) rotate(33)">FRONT</text>
      <text fontSize="8" transform="translate(1875 214) rotate(-34)">RIGHT</text>
      <text x="1818" y="171" fontSize="13" fill="#9090fa">Z</text>
      <text x="1867" y="255" fontSize="12" fill="#f79a9a">X</text>
    </g>
  </svg>
);

const RightSide = () => (
  <RightColumn>
    <CubeWrap>
      <ViewCube />
    </CubeWrap>
    <DrawerButton aria-label="Open side panel">
      <svg width="32" height="96" viewBox="0 0 32 96">
        <defs>
          <linearGradient id="chev" x1="0" y1="0" x2="0" y2="1">
            <stop offset="0" stopColor="#4ba9dc" />
            <stop offset="1" stopColor="#256f92" />
          </linearGradient>
        </defs>
        <path d="M14 60V74Q16 92 32 95V60Z" fill="#999" />
        <path d="M0 0H32V83L0 51Z" fill="#f0f0f0" />
        <path d="M32 .5H.5V51" fill="none" stroke="#a9a9a9" />
        <ellipse cx="16" cy="34" rx="9" ry="1" fill="#a8a8a8" />
        <path d="M17 15H23L16 24 23 33H17L10 24Z" fill="url(#chev)" />
      </svg>
    </DrawerButton>
    <Status>
      Seat:1
      <svg width="14" height="14" viewBox="0 0 14 14" aria-hidden="true">
        <path d="M7 0A7 7 0 0 1 14 7V14H7A7 7 0 0 1 7 0Z" fill="#000" />
        <path d="M3 9Q6 5 11 4V6M6 10Q8 7 11 7V10Z" fill="none" stroke="#fff" strokeWidth="1.200" />
      </svg>
    </Status>
  </RightColumn>
);

/* ------------------------------------------------------------------ */
/* Timeline                                                            */
/* ------------------------------------------------------------------ */

const Timeline = styled.footer`
  position: relative;
  display: flex;
  height: 49px;
  border-top: 1px solid #d3d3d3;
  background: ${color.panel};
`;

const Player = styled.div`
  display: flex;
  width: 142px;
  padding: 12px 0 0 4px;
`;

const PlayerButton = styled.button`
  display: grid;
  place-items: center;
  width: 25px;
  height: 24px;
`;

const Track = styled.div`
  display: flex;
  flex-direction: column;
  padding-top: 15px;
`;

const Steps = styled.ol`
  display: flex;
`;

const Step = styled.li<{ $tick: boolean }>`
  display: flex;
  flex-direction: column;
  align-items: center;
  gap: 3px;
  width: 24px;
  &::after {
    content: "";
    width: 2px;
    height: 4px;
    background: ${(p) => (p.$tick ? "#c6c6c6" : "transparent")};
  }
`;

const Rail = styled.div`
  height: 2px;
  margin: 0 14px 0 11px;
  background: #c6c6c6;
`;

const Marker = styled.div`
  position: relative;
  width: 14px;
  padding-top: 9px;
  margin-left: -7px;
`;

const ExpandBox = styled.button`
  position: absolute;
  left: -12px;
  bottom: 3px;
`;

const Settings = styled.button`
  align-self: flex-start;
  margin: 16px 14px 0 auto;
`;

const Badge = styled.svg`
  position: absolute;
  right: 31px;
  bottom: 0;
`;

const steps =
  "sketchMini sketchMini extrude extrude planes split sketchMini extrude sketchMini sketchMini extrude extrude extrude sketchMini jointMini jointMini sketchMini extrude mirror halfBox halfBox loft loft combine combine extrude shellMini split jointMini jointMini patch sketchMini extrude sketchMini extrude thicken thicken arcBand corner stitch chamfer fillet fillet sketchMini trim erase chamfer fillet jointMini group".split(
    " "
  );

const player = [
  { name: "Go to start", d: "M1 0H3V14H1ZM12 0V14L3 7Z" },
  { name: "Step back", d: "M9 1V13L1 7ZM10 5H12V10H10Z" },
  { name: "Play", d: "M1 0 13 7 1 14Z" },
  { name: "Step forward", d: "M4 1V13L13 7ZM1 5H3V10H1Z" },
  { name: "Go to end", d: "M1 0V14L10 7ZM10 0H12V14H10Z" },
];

const TimelineBar = () => (
  <Timeline>
    <Player>
      {player.map((p) => (
        <PlayerButton key={p.name} aria-label={p.name}>
          <svg width="13" height="14" viewBox="0 0 13 14"><path d={p.d} fill="#555" /></svg>
        </PlayerButton>
      ))}
    </Player>
    <Track>
      <Steps>
        {steps.map((s, i) => (
          <Step key={i} $tick={i < steps.length - 1}>
            <Feature name={s} size={16} />
          </Step>
        ))}
      </Steps>
      <Rail />
    </Track>
    <Marker>
      <svg width="14" height="33" viewBox="0 0 14 33" aria-hidden="true">
        <path d="M1 0H13V6L8 11V33H6V11L1 6Z" fill="#666" />
      </svg>
      <ExpandBox aria-label="Expand group">
        <svg width="10" height="10"><path d="M0 0H10V10H0Z" fill="#777" /><path d="M5 2V8M2 5H8" stroke="#fff" strokeWidth="1.500" /></svg>
      </ExpandBox>
    </Marker>
    <Settings aria-label="Timeline settings">
      <Gear size={15} />
    </Settings>
    <Badge width="48" height="19" viewBox="0 0 48 19" aria-hidden="true">
      <path d="M40 8H48V19H40Z" fill="#b77a50" />
      <path d="M0 4 7 0V19H0Z" fill="#fbb183" />
      <path d="M7 0H44V19H7Z" fill="#fd9446" />
      <path d="M21 8H33V12H26V14H32V18H26V19H21Z" fill="#fff" />
    </Badge>
  </Timeline>
);

export default function App() {
  return (
    <Shell>
      <GlobalStyle />
      <Title />
      <Tabs />
      <RibbonBar />
      <Stage>
        <Chair />
        <Browser />
        <CenterColumn>
          <NavBar>
            {navIcons.map((n) => (
              <NavButton key={n.name} aria-label={n.name}>
                <svg width="16" height="16" viewBox="0 0 16 16">{n.art}</svg>
                {n.menu && <Caret />}
              </NavButton>
            ))}
          </NavBar>
        </CenterColumn>
        <RightSide />
      </Stage>
      <TimelineBar />
    </Shell>
  );
}
